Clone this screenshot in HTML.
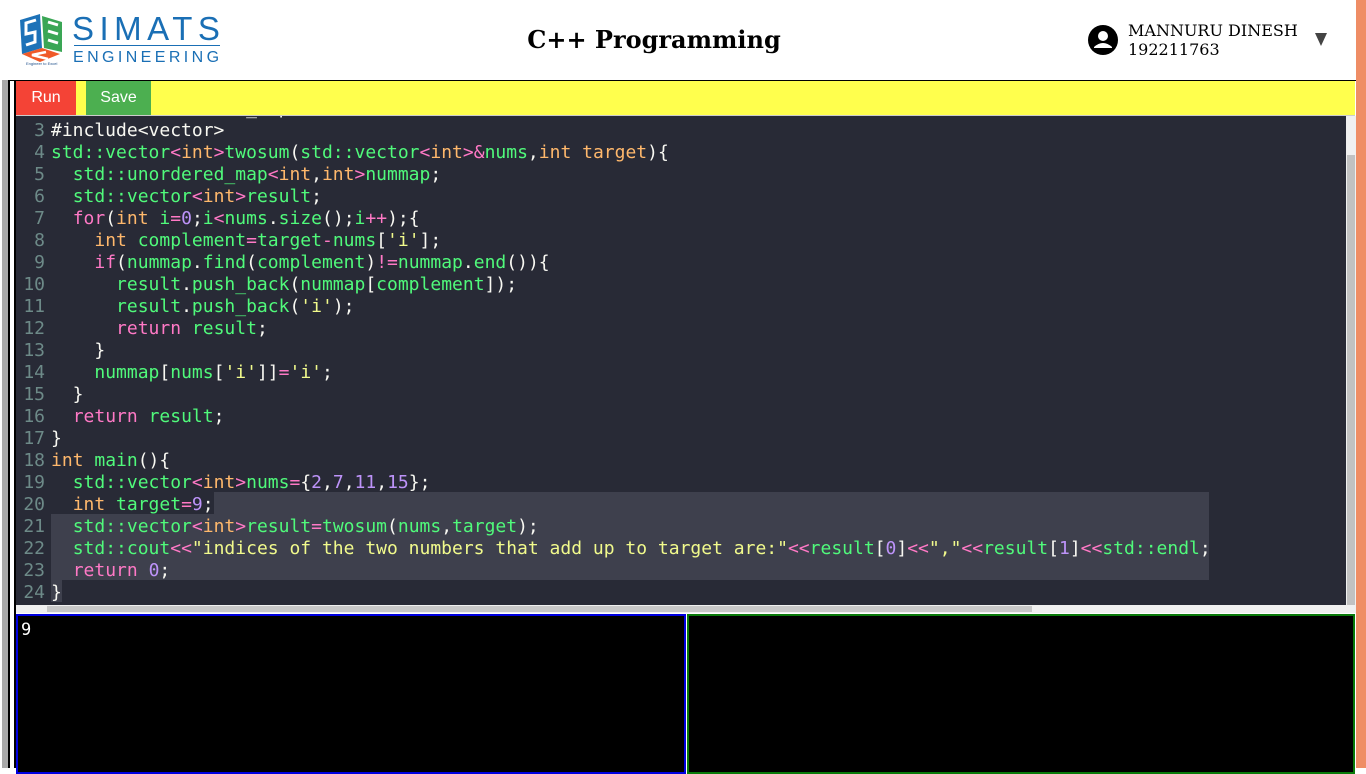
<!DOCTYPE html>
<html><head><meta charset="utf-8"><style>
*{margin:0;padding:0;box-sizing:border-box}
body{width:1366px;height:768px;overflow:hidden;background:#fff;position:relative;font-family:"Liberation Sans",sans-serif}
.abs{position:absolute}
.code{font-family:"DejaVu Sans Mono",monospace;font-size:18px;line-height:22px;white-space:pre;color:#f8f8f2}
.code div{position:relative;height:22px}
.g{color:#50fa7b}.p{color:#ff79c6}.o{color:#ffb86c}.v{color:#bd93f9}.y{color:#f1fa8c}
.ln{position:absolute;left:0;top:0;width:29px;text-align:right;color:#6d8a88}
.t{position:absolute;left:35px;top:0}
</style></head><body>
<svg class="abs" style="left:18px;top:12px" width="48" height="54" viewBox="0 0 48 54">
<polygon points="2,8 22,2 24,36 4,42" fill="#1d72b8"/>
<polygon points="24,4 44,10 44,40 26,36" fill="#3aa655"/>
<polygon points="4,42 24,36 42,42 22,50" fill="#f05a28"/>
<path d="M18,8 L8,11 L8,22 L17,20 L17,30 L8,33" stroke="#fff" stroke-width="3" fill="none"/>
<path d="M30,10 L40,13 M30,19 L40,22 M30,28 L40,31" stroke="#fff" stroke-width="3"/>
<path d="M28,40 L14,43 L22,45 L30,47" stroke="#fff" stroke-width="2.5" fill="none"/>
<text x="8" y="53" font-size="4" fill="#1d4f8a" font-family="Liberation Sans">Engineer to Excel</text>
</svg>
<div class="abs" style="left:72px;top:12px;font-size:33px;color:#1a6fb5;letter-spacing:5.5px;line-height:34px">SIMATS</div>
<div class="abs" style="left:74px;top:45px;width:146px;height:1px;background:#1a6fb5"></div>
<div class="abs" style="left:73px;top:48px;font-size:16px;color:#1a6fb5;letter-spacing:3.4px;line-height:20px">ENGINEERING</div>
<div class="abs" style="left:0;width:1308px;top:25px;text-align:center;font-family:'DejaVu Serif',serif;font-weight:bold;font-size:24px;line-height:30px;color:#000">C++ Programming</div>
<svg class="abs" style="left:1088px;top:25px" width="30" height="30" viewBox="0 0 30 30"><circle cx="15" cy="15" r="15" fill="#000"/><circle cx="15" cy="11" r="5" fill="#fff"/><path d="M6,22 Q15,14 24,22 L24,23 L6,23Z" fill="#fff"/></svg>
<div class="abs" style="left:1128px;top:21px;font-family:'DejaVu Serif',serif;font-size:16px;line-height:19px;color:#000">MANNURU DINESH<br>192211763</div>
<div class="abs" style="left:1315px;top:33px;width:0;height:0;border-left:6px solid transparent;border-right:6px solid transparent;border-top:13px solid #444"></div>
<div class="abs" style="left:1356px;top:0;width:10px;height:768px;background:#ef8d65"></div>
<div class="abs" style="left:2px;top:80px;width:6px;height:688px;background:#aaa"></div>
<div class="abs" style="left:8px;top:80px;width:2px;height:688px;background:#000"></div>
<div class="abs" style="left:14px;top:80px;width:2px;height:688px;background:#000"></div>
<div class="abs" style="left:10px;top:80px;width:1346px;height:1px;background:#000"></div>
<div class="abs" style="left:16px;top:81px;width:1339px;height:34px;background:#ffff4d"></div>
<div class="abs" style="left:16px;top:81px;width:60px;height:34px;background:#f44336;color:#fff;font-size:16px;text-align:center;line-height:34px">Run</div>
<div class="abs" style="left:86px;top:81px;width:65px;height:34px;background:#4caf50;color:#fff;font-size:16px;text-align:center;line-height:34px">Save</div>
<div class="abs" style="left:16px;top:115px;width:1339px;height:1px;background:#ccc"></div>
<div class="abs" style="left:16px;top:116px;width:1330px;height:489px;background:#282a36;overflow:hidden">
 <div class="abs" style="left:198px;top:376px;width:995px;height:22px;background:#3e404d"></div>
 <div class="abs" style="left:35px;top:398px;width:1158px;height:66px;background:#3e404d"></div>
 <div class="abs" style="left:35px;top:464px;width:11px;height:22px;background:#3e404d"></div>
 <div class="code abs" style="left:0;top:-18px;width:1330px"><div><span class="ln">2</span><span class="t">#include&lt;unordered_map&gt;</span></div><div><span class="ln">3</span><span class="t">#include&lt;vector&gt;</span></div><div><span class="ln">4</span><span class="t"><span class="g">std::vector</span><span class="p">&lt;</span><span class="o">int</span><span class="p">&gt;</span><span class="g">twosum</span>(<span class="g">std::vector</span><span class="p">&lt;</span><span class="o">int</span><span class="p">&gt;&amp;</span><span class="g">nums</span>,<span class="o">int</span> <span class="o">target</span>){</span></div><div><span class="ln">5</span><span class="t">  <span class="g">std::unordered_map</span><span class="p">&lt;</span><span class="o">int</span>,<span class="o">int</span><span class="p">&gt;</span><span class="g">nummap</span>;</span></div><div><span class="ln">6</span><span class="t">  <span class="g">std::vector</span><span class="p">&lt;</span><span class="o">int</span><span class="p">&gt;</span><span class="g">result</span>;</span></div><div><span class="ln">7</span><span class="t">  <span class="p">for</span>(<span class="o">int</span> <span class="g">i</span><span class="p">=</span><span class="v">0</span>;<span class="g">i</span><span class="p">&lt;</span><span class="g">nums</span>.<span class="g">size</span>();<span class="g">i</span><span class="p">++</span>);{</span></div><div><span class="ln">8</span><span class="t">    <span class="o">int</span> <span class="g">complement</span><span class="p">=</span><span class="g">target</span><span class="p">-</span><span class="g">nums</span>[<span class="y">'i'</span>];</span></div><div><span class="ln">9</span><span class="t">    <span class="p">if</span>(<span class="g">nummap</span>.<span class="g">find</span>(<span class="g">complement</span>)<span class="p">!=</span><span class="g">nummap</span>.<span class="g">end</span>()){</span></div><div><span class="ln">10</span><span class="t">      <span class="g">result</span>.<span class="g">push_back</span>(<span class="g">nummap</span>[<span class="g">complement</span>]);</span></div><div><span class="ln">11</span><span class="t">      <span class="g">result</span>.<span class="g">push_back</span>(<span class="y">'i'</span>);</span></div><div><span class="ln">12</span><span class="t">      <span class="p">return</span> <span class="g">result</span>;</span></div><div><span class="ln">13</span><span class="t">    }</span></div><div><span class="ln">14</span><span class="t">    <span class="g">nummap</span>[<span class="g">nums</span>[<span class="y">'i'</span>]]<span class="p">=</span><span class="y">'i'</span>;</span></div><div><span class="ln">15</span><span class="t">  }</span></div><div><span class="ln">16</span><span class="t">  <span class="p">return</span> <span class="g">result</span>;</span></div><div><span class="ln">17</span><span class="t">}</span></div><div><span class="ln">18</span><span class="t"><span class="o">int</span> <span class="g">main</span>(){</span></div><div><span class="ln">19</span><span class="t">  <span class="g">std::vector</span><span class="p">&lt;</span><span class="o">int</span><span class="p">&gt;</span><span class="g">nums</span><span class="p">=</span>{<span class="v">2</span>,<span class="v">7</span>,<span class="v">11</span>,<span class="v">15</span>};</span></div><div><span class="ln">20</span><span class="t">  <span class="o">int</span> <span class="g">target</span><span class="p">=</span><span class="v">9</span>;</span></div><div><span class="ln">21</span><span class="t">  <span class="g">std::vector</span><span class="p">&lt;</span><span class="o">int</span><span class="p">&gt;</span><span class="g">result</span><span class="p">=</span><span class="g">twosum</span>(<span class="g">nums</span>,<span class="g">target</span>);</span></div><div><span class="ln">22</span><span class="t">  <span class="g">std::cout</span><span class="p">&lt;&lt;</span><span class="y">"indices of the two numbers that add up to target are:"</span><span class="p">&lt;&lt;</span><span class="g">result</span>[<span class="v">0</span>]<span class="p">&lt;&lt;</span><span class="y">","</span><span class="p">&lt;&lt;</span><span class="g">result</span>[<span class="v">1</span>]<span class="p">&lt;&lt;</span><span class="g">std::endl</span>;</span></div><div><span class="ln">23</span><span class="t">  <span class="p">return</span> <span class="v">0</span>;</span></div><div><span class="ln">24</span><span class="t">}</span></div></div>
</div>
<div class="abs" style="left:1346px;top:116px;width:10px;height:497px;background:#f0f0f0"></div>
<div class="abs" style="left:1347px;top:155px;width:8px;height:450px;background:#c1c1c1"></div>
<div class="abs" style="left:16px;top:605px;width:1330px;height:8px;background:#f0f0f0"></div>
<div class="abs" style="left:47px;top:606px;width:985px;height:6px;background:#c8c8c8"></div>
<div class="abs" style="left:16px;top:614px;width:670px;height:160px;background:#000;border:2px solid #0000e0"></div>
<div class="abs code" style="left:21px;top:619px;color:#fff;font-size:17px">9</div>
<div class="abs" style="left:687px;top:614px;width:668px;height:160px;background:#000;border:2px solid #0a7a0a"></div>
</body></html>
